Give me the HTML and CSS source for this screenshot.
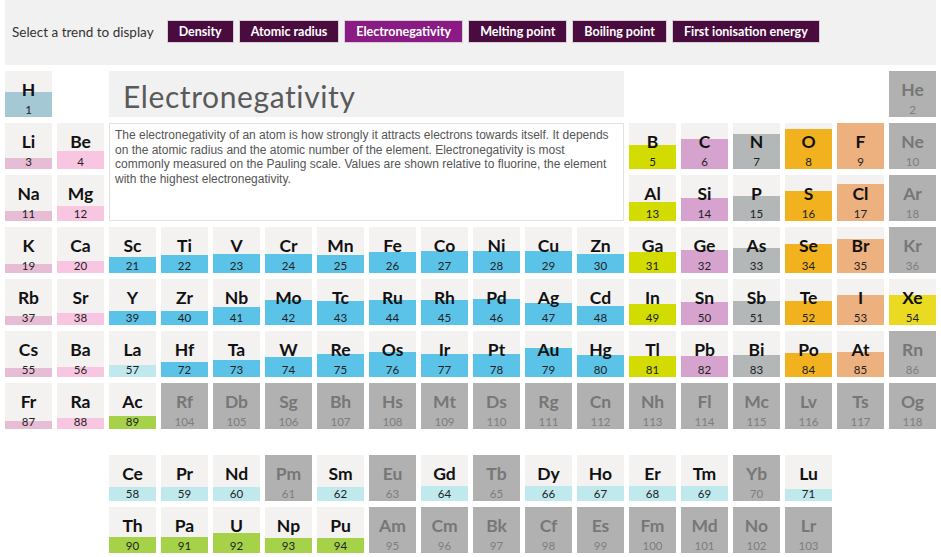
FILE: index.html
```html
<!DOCTYPE html>
<html lang="en">
<head>
<meta charset="utf-8">
<title>Periodic table – Electronegativity</title>
<link rel="stylesheet" href="styles.css">
</head>
<body>
<div class="page">
  <div class="topbar">
    <span class="label">Select a trend to display</span>
    <div class="btns">
      <button class="btn">Density</button>
      <button class="btn">Atomic radius</button>
      <button class="btn active">Electronegativity</button>
      <button class="btn">Melting point</button>
      <button class="btn">Boiling point</button>
      <button class="btn">First ionisation energy</button>
    </div>
  </div>

  <div class="table">
    <div class="el h" style="--h:55%"><span class="sym">H</span><span class="num">1</span></div>
    <div class="title">Electronegativity</div>
    <div class="desc">The electronegativity of an atom is how strongly it attracts electrons towards itself. It depends on the atomic radius and the atomic number of the element. Electronegativity is most commonly measured on the Pauling scale. Values are shown relative to fluorine, the element with the highest electronegativity.</div>
    <div class="el x col18"><span class="sym">He</span><span class="num">2</span></div>

    <div class="el alk" style="--h:24%"><span class="sym">Li</span><span class="num">3</span></div>
    <div class="el ae" style="--h:39%"><span class="sym">Be</span><span class="num">4</span></div>
    <div class="el b" style="--h:52%"><span class="sym">B</span><span class="num">5</span></div>
    <div class="el c" style="--h:65%"><span class="sym">C</span><span class="num">6</span></div>
    <div class="el n" style="--h:76%"><span class="sym">N</span><span class="num">7</span></div>
    <div class="el o" style="--h:88%"><span class="sym">O</span><span class="num">8</span></div>
    <div class="el hal" style="--h:100%"><span class="sym">F</span><span class="num">9</span></div>
    <div class="el x"><span class="sym">Ne</span><span class="num">10</span></div>

    <div class="el alk" style="--h:22%"><span class="sym">Na</span><span class="num">11</span></div>
    <div class="el ae" style="--h:33%"><span class="sym">Mg</span><span class="num">12</span></div>
    <div class="el b" style="--h:42%"><span class="sym">Al</span><span class="num">13</span></div>
    <div class="el c" style="--h:49%"><span class="sym">Si</span><span class="num">14</span></div>
    <div class="el n" style="--h:54%"><span class="sym">P</span><span class="num">15</span></div>
    <div class="el o" style="--h:66%"><span class="sym">S</span><span class="num">16</span></div>
    <div class="el hal" style="--h:80%"><span class="sym">Cl</span><span class="num">17</span></div>
    <div class="el x"><span class="sym">Ar</span><span class="num">18</span></div>

    <div class="el alk" style="--h:20%"><span class="sym">K</span><span class="num">19</span></div>
    <div class="el ae" style="--h:25%"><span class="sym">Ca</span><span class="num">20</span></div>
    <div class="el tm" style="--h:35%"><span class="sym">Sc</span><span class="num">21</span></div>
    <div class="el tm" style="--h:40%"><span class="sym">Ti</span><span class="num">22</span></div>
    <div class="el tm" style="--h:41%"><span class="sym">V</span><span class="num">23</span></div>
    <div class="el tm" style="--h:41%"><span class="sym">Cr</span><span class="num">24</span></div>
    <div class="el tm" style="--h:39%"><span class="sym">Mn</span><span class="num">25</span></div>
    <div class="el tm" style="--h:46%"><span class="sym">Fe</span><span class="num">26</span></div>
    <div class="el tm" style="--h:48%"><span class="sym">Co</span><span class="num">27</span></div>
    <div class="el tm" style="--h:48%"><span class="sym">Ni</span><span class="num">28</span></div>
    <div class="el tm" style="--h:48%"><span class="sym">Cu</span><span class="num">29</span></div>
    <div class="el tm" style="--h:41%"><span class="sym">Zn</span><span class="num">30</span></div>
    <div class="el b" style="--h:46%"><span class="sym">Ga</span><span class="num">31</span></div>
    <div class="el c" style="--h:50%"><span class="sym">Ge</span><span class="num">32</span></div>
    <div class="el n" style="--h:54%"><span class="sym">As</span><span class="num">33</span></div>
    <div class="el o" style="--h:64%"><span class="sym">Se</span><span class="num">34</span></div>
    <div class="el hal" style="--h:74%"><span class="sym">Br</span><span class="num">35</span></div>
    <div class="el x"><span class="sym">Kr</span><span class="num">36</span></div>

    <div class="el alk" style="--h:20%"><span class="sym">Rb</span><span class="num">37</span></div>
    <div class="el ae" style="--h:25%"><span class="sym">Sr</span><span class="num">38</span></div>
    <div class="el tm" style="--h:30%"><span class="sym">Y</span><span class="num">39</span></div>
    <div class="el tm" style="--h:30%"><span class="sym">Zr</span><span class="num">40</span></div>
    <div class="el tm" style="--h:40%"><span class="sym">Nb</span><span class="num">41</span></div>
    <div class="el tm" style="--h:54%"><span class="sym">Mo</span><span class="num">42</span></div>
    <div class="el tm" style="--h:52%"><span class="sym">Tc</span><span class="num">43</span></div>
    <div class="el tm" style="--h:54%"><span class="sym">Ru</span><span class="num">44</span></div>
    <div class="el tm" style="--h:54%"><span class="sym">Rh</span><span class="num">45</span></div>
    <div class="el tm" style="--h:56%"><span class="sym">Pd</span><span class="num">46</span></div>
    <div class="el tm" style="--h:48%"><span class="sym">Ag</span><span class="num">47</span></div>
    <div class="el tm" style="--h:41%"><span class="sym">Cd</span><span class="num">48</span></div>
    <div class="el b" style="--h:45%"><span class="sym">In</span><span class="num">49</span></div>
    <div class="el c" style="--h:49%"><span class="sym">Sn</span><span class="num">50</span></div>
    <div class="el n" style="--h:52%"><span class="sym">Sb</span><span class="num">51</span></div>
    <div class="el o" style="--h:52%"><span class="sym">Te</span><span class="num">52</span></div>
    <div class="el hal" style="--h:65%"><span class="sym">I</span><span class="num">53</span></div>
    <div class="el ng" style="--h:65%"><span class="sym">Xe</span><span class="num">54</span></div>

    <div class="el alk" style="--h:20%"><span class="sym">Cs</span><span class="num">55</span></div>
    <div class="el ae" style="--h:22%"><span class="sym">Ba</span><span class="num">56</span></div>
    <div class="el lan" style="--h:26%"><span class="sym">La</span><span class="num">57</span></div>
    <div class="el tm" style="--h:33%"><span class="sym">Hf</span><span class="num">72</span></div>
    <div class="el tm" style="--h:37%"><span class="sym">Ta</span><span class="num">73</span></div>
    <div class="el tm" style="--h:44%"><span class="sym">W</span><span class="num">74</span></div>
    <div class="el tm" style="--h:49%"><span class="sym">Re</span><span class="num">75</span></div>
    <div class="el tm" style="--h:55%"><span class="sym">Os</span><span class="num">76</span></div>
    <div class="el tm" style="--h:49%"><span class="sym">Ir</span><span class="num">77</span></div>
    <div class="el tm" style="--h:49%"><span class="sym">Pt</span><span class="num">78</span></div>
    <div class="el tm" style="--h:64%"><span class="sym">Au</span><span class="num">79</span></div>
    <div class="el tm" style="--h:48%"><span class="sym">Hg</span><span class="num">80</span></div>
    <div class="el b" style="--h:46%"><span class="sym">Tl</span><span class="num">81</span></div>
    <div class="el c" style="--h:46%"><span class="sym">Pb</span><span class="num">82</span></div>
    <div class="el n" style="--h:48%"><span class="sym">Bi</span><span class="num">83</span></div>
    <div class="el o" style="--h:52%"><span class="sym">Po</span><span class="num">84</span></div>
    <div class="el hal" style="--h:55%"><span class="sym">At</span><span class="num">85</span></div>
    <div class="el x"><span class="sym">Rn</span><span class="num">86</span></div>

    <div class="el alk" style="--h:18%"><span class="sym">Fr</span><span class="num">87</span></div>
    <div class="el ae" style="--h:23%"><span class="sym">Ra</span><span class="num">88</span></div>
    <div class="el act" style="--h:29%"><span class="sym">Ac</span><span class="num">89</span></div>
    <div class="el x"><span class="sym">Rf</span><span class="num">104</span></div>
    <div class="el x"><span class="sym">Db</span><span class="num">105</span></div>
    <div class="el x"><span class="sym">Sg</span><span class="num">106</span></div>
    <div class="el x"><span class="sym">Bh</span><span class="num">107</span></div>
    <div class="el x"><span class="sym">Hs</span><span class="num">108</span></div>
    <div class="el x"><span class="sym">Mt</span><span class="num">109</span></div>
    <div class="el x"><span class="sym">Ds</span><span class="num">110</span></div>
    <div class="el x"><span class="sym">Rg</span><span class="num">111</span></div>
    <div class="el x"><span class="sym">Cn</span><span class="num">112</span></div>
    <div class="el x"><span class="sym">Nh</span><span class="num">113</span></div>
    <div class="el x"><span class="sym">Fl</span><span class="num">114</span></div>
    <div class="el x"><span class="sym">Mc</span><span class="num">115</span></div>
    <div class="el x"><span class="sym">Lv</span><span class="num">116</span></div>
    <div class="el x"><span class="sym">Ts</span><span class="num">117</span></div>
    <div class="el x"><span class="sym">Og</span><span class="num">118</span></div>
  </div>

  <div class="fblock">
    <div class="el lan" style="--h:30%"><span class="sym">Ce</span><span class="num">58</span></div>
    <div class="el lan" style="--h:30%"><span class="sym">Pr</span><span class="num">59</span></div>
    <div class="el lan" style="--h:30%"><span class="sym">Nd</span><span class="num">60</span></div>
    <div class="el x"><span class="sym">Pm</span><span class="num">61</span></div>
    <div class="el lan" style="--h:30%"><span class="sym">Sm</span><span class="num">62</span></div>
    <div class="el x"><span class="sym">Eu</span><span class="num">63</span></div>
    <div class="el lan" style="--h:33%"><span class="sym">Gd</span><span class="num">64</span></div>
    <div class="el x"><span class="sym">Tb</span><span class="num">65</span></div>
    <div class="el lan" style="--h:33%"><span class="sym">Dy</span><span class="num">66</span></div>
    <div class="el lan" style="--h:33%"><span class="sym">Ho</span><span class="num">67</span></div>
    <div class="el lan" style="--h:33%"><span class="sym">Er</span><span class="num">68</span></div>
    <div class="el lan" style="--h:33%"><span class="sym">Tm</span><span class="num">69</span></div>
    <div class="el x"><span class="sym">Yb</span><span class="num">70</span></div>
    <div class="el lan" style="--h:26%"><span class="sym">Lu</span><span class="num">71</span></div>

    <div class="el act" style="--h:35%"><span class="sym">Th</span><span class="num">90</span></div>
    <div class="el act" style="--h:35%"><span class="sym">Pa</span><span class="num">91</span></div>
    <div class="el act" style="--h:44%"><span class="sym">U</span><span class="num">92</span></div>
    <div class="el act" style="--h:32%"><span class="sym">Np</span><span class="num">93</span></div>
    <div class="el act" style="--h:32%"><span class="sym">Pu</span><span class="num">94</span></div>
    <div class="el x"><span class="sym">Am</span><span class="num">95</span></div>
    <div class="el x"><span class="sym">Cm</span><span class="num">96</span></div>
    <div class="el x"><span class="sym">Bk</span><span class="num">97</span></div>
    <div class="el x"><span class="sym">Cf</span><span class="num">98</span></div>
    <div class="el x"><span class="sym">Es</span><span class="num">99</span></div>
    <div class="el x"><span class="sym">Fm</span><span class="num">100</span></div>
    <div class="el x"><span class="sym">Md</span><span class="num">101</span></div>
    <div class="el x"><span class="sym">No</span><span class="num">102</span></div>
    <div class="el x"><span class="sym">Lr</span><span class="num">103</span></div>
  </div>
</div>
</body>
</html>
```

FILE: styles.css
```css
* { box-sizing: border-box; }

body {
  margin: 0;
  background: #ffffff;
  font-family: Lato, "Open Sans", "DejaVu Sans", sans-serif;
  color: #111;
}

.page {
  padding: 0 5px;
}

/* ---------- top bar ---------- */
.topbar {
  height: 65px;
  background: #f1f1f1;
  display: flex;
  align-items: center;
  padding-left: 7px;
  padding-bottom: 2px;
}

.label {
  font-size: 13.5px;
  color: #333;
  margin-right: 13px;
}

.btns {
  display: flex;
  gap: 5px;
}

.btn {
  font-family: Lato, "Open Sans", sans-serif;
  font-weight: 700;
  font-size: 12.5px;
  color: #fff;
  background: #4a0c3e;
  border: 1px solid #d8cfd5;
  height: 23px;
  padding: 0 11px;
  margin: 0;
  cursor: pointer;
}

.btn.active {
  background: #8a1b85;
}

/* ---------- periodic table ---------- */
.table {
  display: grid;
  grid-template-columns: repeat(18, 47px);
  grid-auto-rows: 46px;
  column-gap: 5px;
  row-gap: 6px;
  margin-top: 6px;
}

.fblock {
  display: grid;
  grid-template-columns: repeat(14, 47px);
  grid-auto-rows: 46px;
  column-gap: 5px;
  row-gap: 6px;
  margin: 26px 0 0 104px;
}

.title {
  grid-column: 3 / 13;
  grid-row: 1;
  background: #f1f1f2;
  color: #5a5a5a;
  font-size: 30px;
  letter-spacing: 0.6px;
  line-height: 42px;
  padding: 4px 0 0 14px;
}

.desc {
  grid-column: 3 / 13;
  grid-row: 2 / 4;
  background: #fff;
  border: 1px solid #e2e2e2;
  padding: 4px 5px;
  font-family: "Liberation Sans", Arial, sans-serif;
  font-size: 12px;
  line-height: 14.5px;
  color: #555;
}

.col18 {
  grid-column: 18;
}

.el {
  --c: #f3f2f1;
  --h: 0%;
  background: linear-gradient(to top, var(--c) var(--h), #f3f2f1 var(--h));
  display: flex;
  flex-direction: column;
  align-items: center;
  color: #111;
}

.sym {
  font-size: 17.5px;
  font-weight: 700;
  line-height: 20px;
  margin-top: 9px;
}

.num {
  font-size: 11.5px;
  line-height: 13px;
  margin-top: 3px;
  color: #222;
}

.el.x {
  background: #b1b1b1;
  color: #777;
}

.el.x .num {
  color: #7e7e7e;
}

/* category bar colours */
.h   { --c: #a4c8d4; }
.alk { --c: #e7bdd6; }
.ae  { --c: #f9c6e2; }
.tm  { --c: #5bc3e7; }
.lan { --c: #bfe9ec; }
.act { --c: #a6d24a; }
.b   { --c: #d2dc00; }
.c   { --c: #d5a3ce; }
.n   { --c: #b3b7b7; }
.o   { --c: #f2b11e; }
.hal { --c: #edb07f; }
.ng  { --c: #eadb22; }
```
